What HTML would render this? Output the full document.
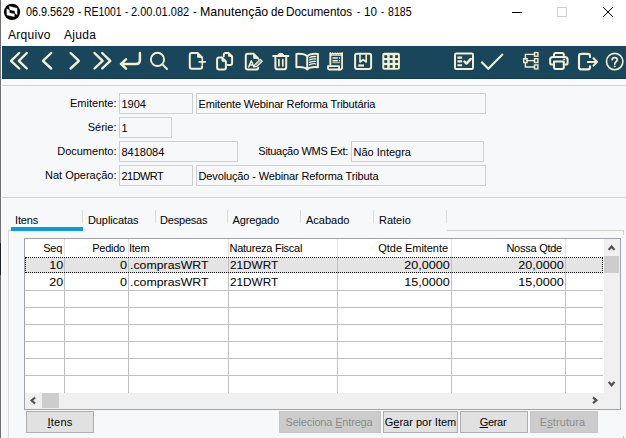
<!DOCTYPE html>
<html><head><meta charset="utf-8">
<style>
*{margin:0;padding:0;box-sizing:border-box}
html,body{width:626px;height:438px;overflow:hidden;background:#f7f8fa;font-family:"Liberation Sans",sans-serif;color:#000}
.abs{position:absolute}
#win{position:relative;width:626px;height:438px;overflow:hidden;background:#f7f8fa}
#titlebar{left:1px;top:0;width:625px;height:46px;background:#fff}
#title{left:0;top:4px;font-size:12.2px;line-height:16px;white-space:nowrap}
#title span{position:absolute;top:0;transform-origin:0 0;white-space:nowrap}
.menu{top:27px;font-size:12px;line-height:16px;white-space:nowrap;letter-spacing:.3px}
#toolbar{left:2px;top:46px;width:624px;height:33px;background:#1a465c;border-bottom:1px solid #123a4e}
#strip{left:1px;top:79px;width:625px;height:6px;background:#f9fafb}
.hline{left:2px;width:624px;height:1px;background:#d2d2d2}
#lborder{left:0;top:0;width:1px;height:438px;background:#6f6f6f}
#lborder2{left:1px;top:0;width:1px;height:438px;background:#fdfdfd}
.lbl{font-size:11px;line-height:13px;white-space:nowrap;text-align:right}
.inp{height:21px;border:1px solid #cfcfcf;background:#f7f8fa;font-size:11px;line-height:13px;padding:4px 0 0 1.5px;white-space:nowrap;overflow:hidden}
.tab{top:214px;font-size:11px;line-height:13px;white-space:nowrap}
.tsep{top:210px;width:1px;height:13px;background:#dcdcdc}
#grid{left:24px;top:238px;width:597px;height:172px;border:1px solid #a2a2aa;background:#fff;overflow:hidden}
.gh{top:3px;font-size:11px;line-height:13px;white-space:nowrap;letter-spacing:-.25px}
.gd{font-size:11px;line-height:13px;white-space:nowrap;transform:scaleX(1.1);transform-origin:0 0}
.gd.r{transform-origin:100% 0;transform:scaleX(1.145)}
.vl{top:18px;width:1px;height:136px;background:#c0c0c0}
.vlh{top:0;width:1px;height:18px;background:#e3e3e3}
.hl{left:0;width:578px;height:1px;background:#c0c0c0}
.btn{top:411px;height:22px;border:1px solid #adadad;background:#e1e1e1;font-size:11px;line-height:13px;text-align:center;padding-top:4px;white-space:nowrap}
.btn.dis{background:#cccccc;border-color:#c4c4c4;color:#8c8c8c}
u{text-decoration:underline}
svg{position:absolute;overflow:visible}
</style></head><body>
<div id="win">
<div class="abs" id="titlebar"></div>
<div class="abs" id="lborder"></div>
<div class="abs" id="lborder2"></div>
<div class="abs" style="left:0;top:243px;width:1px;height:32px;background:#1c2226"></div>

<!-- app icon -->
<svg style="left:0;top:0" width="26" height="24" viewBox="0 0 26 24">
 <circle cx="12.050" cy="11.900" r="8.100" fill="#000"/>
 <path d="M9.100 6.300 L17.100 8.150 L17.100 14.800 L14.900 13.350 L14.900 10.950 L9.800 9.700 Z" fill="#fff" stroke="#fff" stroke-width=".3" stroke-linejoin="round"/>
 <path d="M6.800 8.850 L9.300 10.150 L9.300 12.700 L14.400 13.900 L14.350 16.850 L6.800 15 Z" fill="#fff" stroke="#fff" stroke-width=".3" stroke-linejoin="round"/>
</svg>
<div class="abs" id="title"><span style="left:25.7px;transform:scaleX(0.889)">06.9.5629</span><span style="left:77.5px;transform:scaleX(0.8)">-</span><span style="left:84.05px;transform:scaleX(0.853)">RE1001</span><span style="left:125.4px;transform:scaleX(0.8)">-</span><span style="left:130.9px;transform:scaleX(0.903)">2.00.01.082</span><span style="left:192.8px;transform:scaleX(0.875)">-</span><span style="left:199.68px;transform:scaleX(1.017)">Manutenção</span><span style="left:271px;transform:scaleX(0.946)">de</span><span style="left:286.2px;transform:scaleX(0.967)">Documentos</span><span style="left:356.8px;transform:scaleX(0.775)">-</span><span style="left:364.24px;transform:scaleX(0.958)">10</span><span style="left:380.6px;transform:scaleX(0.75)">-</span><span style="left:388.2px;transform:scaleX(0.867)">8185</span></div>

<!-- window controls -->
<div class="abs" style="left:512px;top:12px;width:10px;height:1px;background:#000"></div>
<div class="abs" style="left:557px;top:7px;width:10px;height:10px;border:1px solid #cfcfcf"></div>
<svg style="left:603px;top:7px" width="10" height="10" viewBox="0 0 10 10"><path d="M0 0 L10 10 M10 0 L0 10" stroke="#000" stroke-width="1" fill="none"/></svg>

<div class="abs menu" style="left:8px">Arquivo</div>
<div class="abs menu" style="left:64px">Ajuda</div>

<div class="abs" id="toolbar"></div>
<div class="abs" id="strip"></div>
<div class="abs hline" style="top:85px"></div>
<div class="abs hline" style="top:197px"></div>

<!-- TOOLBAR ICONS -->
<svg id="icons" style="left:0;top:0" width="626" height="90" viewBox="0 0 626 90" fill="none" stroke="#f4efcf" stroke-width="2" stroke-linecap="round" stroke-linejoin="round">
 <!-- first -->
 <path stroke-width="2.400" d="M19.200 53 L11 60.800 L19.200 68.500 M26.800 53 L18.800 60.800 L26.800 68.500"/>
 <!-- prev -->
 <path stroke-width="2.400" d="M51.200 53 L42.900 60.800 L51.200 68.500"/>
 <!-- next -->
 <path stroke-width="2.400" d="M70.600 53 L78.900 60.800 L70.600 68.500"/>
 <!-- last -->
 <path stroke-width="2.400" d="M94.500 53 L102.600 60.800 L94.500 68.500 M102.200 53 L110.300 60.800 L102.200 68.500"/>
 <!-- enter -->
 <path stroke-width="2.500" d="M139.900 53.100 V59.900 Q139.900 63.900 135.900 63.900 H121.800 M126 59.400 L121 63.900 L126 68.600"/>
 <!-- search -->
 <circle cx="157.500" cy="59.400" r="6.600" stroke-width="1.900"/><path stroke-width="2" d="M162.400 64.400 L167 69"/>
 <!-- new doc -->
 <g stroke-width="2">
 <path d="M197.500 52.900 H191.800 Q189.800 52.900 189.800 54.900 V66.800 Q189.800 68.800 191.800 68.800 H200.100 Q202.100 68.800 202.100 66.800 V66.300 M202.100 57.500 V58 M197.500 52.900 L202.100 57.500"/>
 <path d="M197.700 53.600 V57.300 H201.400 Z" fill="#f4efcf" stroke-width="1"/>
 <path d="M199.200 61.900 H205.300 M202.300 59 V64.800" stroke-width="1.600"/>
 </g>
 <!-- copy -->
 <g stroke-width="2">
 <path d="M228.500 52.900 H225.800 Q223.800 52.900 223.800 54.900 V56.200 M228.500 52.900 L232.100 56.500 V63 Q232.100 65 230.100 65 H227.800"/>
 <path d="M228.600 53.500 V56.300 H231.400 Z" fill="#f4efcf" stroke-width="1"/>
 <path d="M221.900 57.400 H219.100 Q217.100 57.400 217.100 59.400 V67.500 Q217.100 69.500 219.100 69.500 H223.900 Q225.900 69.500 225.900 67.500 V61.400 L221.900 57.400"/>
 <path d="M222 58.200 V61.200 H225 Z" fill="#f4efcf" stroke-width="1"/>
 </g>
 <!-- edit -->
 <g stroke-width="2">
 <path d="M253.500 53.800 H247.800 Q245.800 53.800 245.800 55.800 V67.500 Q245.800 69.500 247.800 69.500 H256 Q258 69.500 258.200 67.800 M253.500 53.800 L258.200 58.500 V58.800"/>
 <path d="M253.700 54.500 V58.300 H257.500 Z" fill="#f4efcf" stroke-width="1"/>
 <path d="M248.700 67 L251.300 60.800 L253.900 67 M249.700 65 H252.900" stroke-width="1.500"/>
 <path d="M254.400 66.700 L255 64.500 L260.300 59.300 L262.300 61.300 L257 66.300 Z" stroke-width="1.200"/><path d="M256.200 65.200 L260.900 60.600" stroke-width="0.900"/>
 </g>
 <!-- trash -->
 <g>
 <path d="M273.200 56 H288.300" stroke-width="2"/>
 <path d="M277.600 55.200 Q278.200 53.300 280.700 53.300 Q283.300 53.300 283.900 55.200 Z" fill="#f4efcf" stroke-width="1"/>
 <path d="M275.400 57 V67.200 Q275.400 69.300 277.500 69.300 H284.100 Q286.200 69.300 286.200 67.200 V57" stroke-width="2"/>
 <path d="M278.900 59.600 V65.800 M282.800 59.600 V65.800" stroke-width="1.700"/>
 </g>
 <!-- book -->
 <g stroke-width="2">
 <path d="M307.200 56.400 C305.200 54 299 53.700 296.400 53.900 V67.200 C299 67 305.200 67.300 307.200 69.400 C309.200 67.300 315.400 67 317.900 67.200 V53.900 C315.400 53.700 309.200 54 307.200 56.400 V69.400"/>
 <path d="M309.600 57.500 Q312.500 56.200 315.600 56.600 M309.600 59.900 Q312.500 58.600 315.600 59 M309.600 62.300 Q312.500 61 315.600 61.400 M309.600 64.700 Q312.500 63.400 315.600 63.800" stroke-width="1.300"/>
 </g>
 <!-- receipt -->
 <g stroke-width="1.800">
 <path d="M330.300 53.200 V65.500 M342.100 53.200 V67.600 Q342.100 69.500 340.200 69.500 H338.500"/>
 <path d="M330.300 53.100 L331.500 54.200 L332.700 53.100 L333.900 54.200 L335.100 53.100 L336.300 54.200 L337.500 53.100 L338.700 54.200 L339.900 53.100 L341.100 54.200 L342.100 53.100" stroke-width="1.300"/>
 <path d="M330.300 55.100 H342.100" stroke-width="1.200"/>
 <path d="M328 66.200 H339.100 V69.500 H329.200 Q328 69.500 328 68.300 Z" stroke-width="1.800"/>
 <path d="M332.400 58 H337.900 M332.400 60.700 H337.900" stroke-width="1.600" stroke-linecap="butt"/>
 <path d="M338.900 58 H340.100 M338.900 60.700 H340.100" stroke-width="1.500" stroke-linecap="butt"/>
 <path d="M332.400 62.700 H340.300" stroke-width=".800" stroke-linecap="butt"/>
 </g>
 <!-- save -->
 <g>
 <rect x="355.100" y="53.700" width="16" height="15.200" rx="1.800" stroke-width="2"/>
 <path d="M360 54.500 V62 L363.100 59.600 L366.200 62 V54.500" stroke-width="1.600"/>
 <rect x="358.200" y="64.400" width="5.800" height="2.200" fill="#f4efcf" stroke="none"/>
 </g>
 <!-- grid -->
 <g>
 <rect x="382.300" y="52.800" width="17.600" height="17" rx="2" fill="#f4efcf" stroke="none"/>
 <g fill="#1a465c" stroke="none">
 <rect x="384.300" y="55.200" width="2.900" height="2.800"/><rect x="389.700" y="55.200" width="2.900" height="2.800"/><rect x="395.100" y="55.200" width="2.900" height="2.800"/>
 <rect x="384.300" y="60.100" width="2.900" height="2.800"/><rect x="389.700" y="60.100" width="2.900" height="2.800"/><rect x="395.100" y="60.100" width="2.900" height="2.800"/>
 <rect x="384.300" y="65.100" width="2.900" height="2.800"/><rect x="389.700" y="65.100" width="2.900" height="2.800"/><rect x="395.100" y="65.100" width="2.900" height="2.800"/>
 </g>
 </g>
 <!-- checklist -->
 <g>
 <rect x="455" y="53.500" width="18" height="15.400" rx="1.200" stroke-width="2"/>
 <path d="M457.400 57.600 H462.100 M457.400 61.400 H462.100 M457.400 65.300 H462.100" stroke-width="2.100" stroke-linecap="butt"/>
 <path d="M464.400 61.500 L466.500 63.600 L470.800 58.900" stroke-width="2.400" />
 </g>
 <!-- check -->
 <path d="M481.300 61.800 L488.300 68.700 L502.900 54.100" stroke-width="2.100" stroke-linecap="butt" stroke-linejoin="miter"/>
 <!-- tree -->
 <g stroke-width="1.400" stroke-linejoin="miter">
 <rect x="523.700" y="58.700" width="3.400" height="3.800"/>
 <rect x="534.500" y="52.600" width="3.400" height="3.600"/>
 <rect x="534.500" y="58.700" width="3.400" height="3.800"/>
 <rect x="534.500" y="65" width="3.400" height="3.900"/>
 <path d="M525.400 58.700 V54.400 H534.500 M526.800 60.600 H534.500 M525.400 62.500 V67 H534.500"/>
 </g>
 <!-- printer -->
 <g stroke-width="2">
 <path d="M554 56.800 V54.600 Q554 53 555.600 53 H562.200 Q563.800 53 563.800 54.600 V56.800"/>
 <path d="M554 64.600 H552.300 Q550.100 64.600 550.100 62.400 V59.600 Q550.100 56.900 552.800 56.900 H564.900 Q567.600 56.900 567.600 59.600 V62.400 Q567.600 64.600 565.400 64.600 H563.800"/>
 <path d="M554 61.600 H563.800 V67.300 Q563.800 68.900 562.200 68.900 H555.600 Q554 68.900 554 67.300 Z"/>
 <circle cx="564" cy="59.300" r="0.600" fill="#f4efcf" stroke-width="0.800"/>
 </g>
 <!-- exit -->
 <g stroke-width="2.100">
 <path d="M590 57 V56 Q590 53.900 587.900 53.900 H581.100 Q579 53.900 579 56 V67.300 Q579 69.400 581.100 69.400 H587.900 Q590 69.400 590 67.300 V66.400"/>
 <path d="M587.800 61.900 H596 M593.500 58.200 L597.100 61.900 L593.500 65.600" stroke-width="2"/>
 </g>
 <!-- help -->
 <circle cx="614.700" cy="61.600" r="8.200" stroke-width="1.600"/>
 <path d="M612.200 59.700 Q612.200 57.700 614.700 57.700 Q617.200 57.700 617.200 59.800 Q617.200 61.200 615.800 62 Q614.700 62.700 614.700 64.300" stroke-width="1.700"/>
 <circle cx="614.700" cy="66.500" r="0.500" fill="#f4efcf" stroke-width="0.700"/>
</svg>

<!-- FORM -->
<div class="abs lbl" style="left:40px;width:76.500px;top:97px">Emitente:</div>
<div class="abs inp" style="left:119px;top:93px;width:74px">1904</div>
<div class="abs inp" style="left:196px;top:93px;width:290px;letter-spacing:-.13px">Emitente Webinar Reforma Tributária</div>

<div class="abs lbl" style="left:40px;width:76.500px;top:121px">Série:</div>
<div class="abs inp" style="left:119px;top:117px;width:53px">1</div>

<div class="abs lbl" style="left:40px;width:76.500px;top:145px">Documento:</div>
<div class="abs inp" style="left:119px;top:141px;width:119px;">8418084</div>
<div class="abs lbl" style="left:248px;width:100px;top:145px;letter-spacing:-.3px">Situação WMS Ext:</div>
<div class="abs inp" style="left:351px;top:141px;width:133px;">Não Integra</div>

<div class="abs lbl" style="left:20px;width:96.500px;top:169px">Nat Operação:</div>
<div class="abs inp" style="left:119px;top:165px;width:74px;letter-spacing:-.55px">21DWRT</div>
<div class="abs inp" style="left:196px;top:165px;width:290px;letter-spacing:-.13px">Devolução - Webinar Reforma Tributa</div>

<!-- TABS -->
<div class="abs tab" style="left:15px;letter-spacing:-.15px">Itens</div>
<div class="abs tab" style="left:88px;letter-spacing:-.1px">Duplicatas</div>
<div class="abs tab" style="left:160px;letter-spacing:-.2px">Despesas</div>
<div class="abs tab" style="left:232.500px;letter-spacing:-.15px">Agregado</div>
<div class="abs tab" style="left:306px">Acabado</div>
<div class="abs tab" style="left:379px">Rateio</div>
<div class="abs tsep" style="left:82px"></div>
<div class="abs tsep" style="left:155px"></div>
<div class="abs tsep" style="left:227px"></div>
<div class="abs tsep" style="left:300px"></div>
<div class="abs tsep" style="left:373px"></div>
<div class="abs tsep" style="left:446px"></div>
<!-- pane border -->
<div class="abs" style="left:8px;top:230px;width:1px;height:208px;background:#dadada"></div>
<div class="abs" style="left:8px;top:230px;width:4px;height:1px;background:#cfcfcf"></div>
<div class="abs" style="left:447px;top:230px;width:177px;height:1px;background:#d0d0d0"></div>
<div class="abs" style="left:623px;top:230px;width:1px;height:5px;background:#d0d0d0"></div>
<div class="abs" style="left:11px;top:227px;width:72px;height:4px;background:#0a9be0"></div>

<div class="abs" style="left:623px;top:436px;width:1px;height:2px;background:#c8c8c8"></div>
<!-- GRID -->
<div class="abs" id="grid">
 <div class="abs" style="left:0;top:19px;width:578px;height:15px;background:#e4e4e4"></div>
 <div class="abs vlh" style="left:39px"></div><div class="abs vlh" style="left:103px"></div><div class="abs vlh" style="left:203px"></div><div class="abs vlh" style="left:312px"></div><div class="abs vlh" style="left:426px"></div><div class="abs vlh" style="left:540px"></div>
 <div class="abs vl" style="left:39px"></div><div class="abs vl" style="left:103px"></div><div class="abs vl" style="left:203px"></div><div class="abs vl" style="left:312px"></div><div class="abs vl" style="left:426px"></div><div class="abs vl" style="left:540px"></div>
 <div class="abs hl" style="top:51px"></div><div class="abs hl" style="top:68px"></div><div class="abs hl" style="top:85px"></div><div class="abs hl" style="top:102px"></div><div class="abs hl" style="top:119px"></div><div class="abs hl" style="top:136px"></div>
 <!-- focus dotted -->
 <div class="abs" style="left:0;top:18px;width:578px;height:16px;border:1px dotted #000"></div>
 <!-- header -->
 <div class="abs gh" style="right:558px">Seq</div>
 <div class="abs gh" style="right:495px">Pedido</div>
 <div class="abs gh" style="left:104px">Item</div>
 <div class="abs gh" style="left:204.500px">Natureza Fiscal</div>
 <div class="abs gh" style="right:172px;letter-spacing:-.05px">Qtde Emitente</div>
 <div class="abs gh" style="right:58px">Nossa Qtde</div>
 <!-- rows -->
 <div class="abs gd r" style="right:557px;top:20px">10</div>
 <div class="abs gd r" style="right:493px;top:20px">0</div>
 <div class="abs gd" style="left:105px;transform:scaleX(1.12);top:20px">.comprasWRT</div>
 <div class="abs gd" style="left:204.500px;transform:scaleX(1.07);top:20px">21DWRT</div>
 <div class="abs gd r" style="right:170px;top:20px">20,0000</div>
 <div class="abs gd r" style="right:56px;top:20px">20,0000</div>
 <div class="abs gd r" style="right:557px;top:37px">20</div>
 <div class="abs gd r" style="right:493px;top:37px">0</div>
 <div class="abs gd" style="left:105px;transform:scaleX(1.12);top:37px">.comprasWRT</div>
 <div class="abs gd" style="left:204.500px;transform:scaleX(1.07);top:37px">21DWRT</div>
 <div class="abs gd r" style="right:170px;top:37px">15,0000</div>
 <div class="abs gd r" style="right:56px;top:37px">15,0000</div>
 <!-- v scrollbar -->
 <div class="abs" style="left:579px;top:0;width:17px;height:154px;background:#f0f0f0"></div>
 <div class="abs" style="left:579px;top:17px;width:15px;height:17px;background:#cdcdcd"></div>
 <!-- h scrollbar -->
 <div class="abs" style="left:0;top:154px;width:596px;height:17px;background:#f0f0f0"></div>
 <div class="abs" style="left:17px;top:154px;width:17px;height:15px;background:#cdcdcd"></div>
 <svg style="left:0;top:0" width="596" height="171" fill="none" stroke="#505050" stroke-width="2.200">
  <path d="M583.700 10.900 L586.600 7.500 L589.500 10.900"/>
  <path d="M583.700 142.900 L586.600 146.300 L589.500 142.900"/>
  <path d="M10.100 158.500 L6.600 161.500 L10.100 164.500"/>
  <path d="M568 158.400 L571.400 161.300 L568 164.200"/>
 </svg>
</div>

<!-- BUTTONS -->
<div class="abs btn" style="left:26px;width:68px;letter-spacing:.2px"><u>I</u>tens</div>
<div class="abs btn dis" style="left:279px;width:102px;letter-spacing:-.17px;text-indent:-2px">Seleciona <u>E</u>ntrega</div>
<div class="abs btn" style="left:383px;width:75px">G<u>e</u>rar por Item</div>
<div class="abs btn" style="left:460px;width:68px;letter-spacing:-.3px;text-indent:-2px"><u>G</u>erar</div>
<div class="abs btn dis" style="left:530px;width:68px;letter-spacing:.1px;text-indent:-3px">E<u>s</u>trutura</div>
</div>
</body></html>
